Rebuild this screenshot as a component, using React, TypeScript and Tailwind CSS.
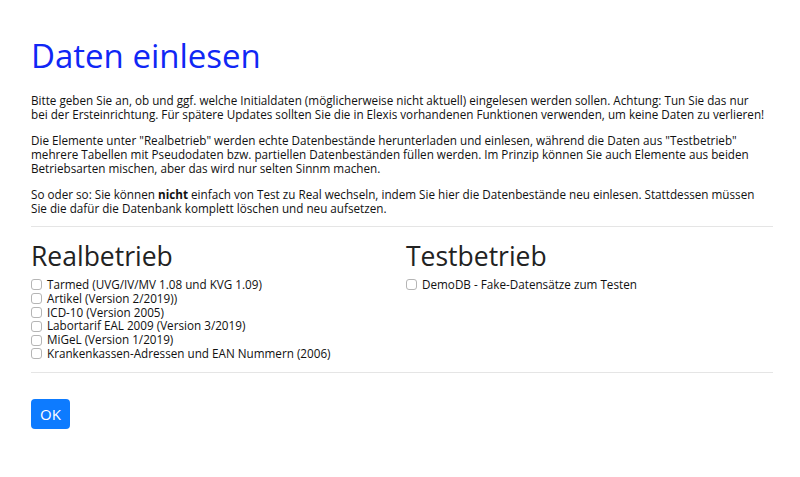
import React from "react";

const real = [
  "Tarmed (UVG/IV/MV 1.08 und KVG 1.09)",
  "Artikel (Version 2/2019))",
  "ICD-10 (Version 2005)",
  "Labortarif EAL 2009 (Version 3/2019)",
  "MiGeL (Version 1/2019)",
  "Krankenkassen-Adressen und EAN Nummern (2006)",
];

const test = ["DemoDB - Fake-Datensätze zum Testen"];

function Item({ label }: { label: string }) {
  return (
    <label className="flex items-center gap-[5px] h-[13.8px]">
      <span className="w-[11px] h-[11px] mt-[2px] rounded-[3px] border border-[#b5b5b5] bg-white shrink-0" />
      <span>{label}</span>
    </label>
  );
}

export default function App() {
  return (
    <div className="min-h-[477px] bg-white pl-[31px] pr-[27px] pt-[32px] text-[11.7px] leading-[14px] text-[#111]" style={{ fontFamily: '"Open Sans", sans-serif' }}>
      <h1 className="text-[33px] leading-[48px] text-[#1027f5] mb-[13px]">Daten einlesen</h1>
      <div className="mr-[8px] flex flex-col gap-[12px]">
        <p>
          Bitte geben Sie an, ob und ggf. welche Initialdaten (möglicherweise nicht aktuell) eingelesen werden sollen. Achtung: Tun Sie das nur bei der Ersteinrichtung. Für spätere Updates sollten Sie die in Elexis vorhandenen Funktionen verwenden, um keine Daten zu verlieren!
        </p>
        <p>
          Die Elemente unter "Realbetrieb" werden echte Datenbestände herunterladen und einlesen, während die Daten aus "Testbetrieb" mehrere Tabellen mit Pseudodaten bzw. partiellen Datenbeständen füllen werden. Im Prinzip können Sie auch Elemente aus beiden Betriebsarten mischen, aber das wird nur selten Sinnm machen.
        </p>
        <p>
          So oder so: Sie können <b>nicht</b> einfach von Test zu Real wechseln, indem Sie hier die Datenbestände neu einlesen. Stattdessen müssen Sie die dafür die Datenbank komplett löschen und neu aufsetzen.
        </p>
      </div>
      <hr className="mt-[11px] border-t border-[#e5e5e5]" />
      <div className="grid grid-cols-2 gap-[8px] mt-[12px]">
        <div>
          <h2 className="text-[26.5px] leading-[34px] text-[#222] mb-[4px]">Realbetrieb</h2>
          {real.map((r) => (
            <Item key={r} label={r} />
          ))}
        </div>
        <div>
          <h2 className="text-[26.5px] leading-[34px] text-[#222] mb-[4px]">Testbetrieb</h2>
          {test.map((r) => (
            <Item key={r} label={r} />
          ))}
        </div>
      </div>
      <hr className="mt-[12px] border-t border-[#e5e5e5]" />
      <button className="mt-[26px] w-[39px] h-[30px] rounded-[4px] bg-[#0d7bff] text-white text-[15px]">OK</button>
    </div>
  );
}
